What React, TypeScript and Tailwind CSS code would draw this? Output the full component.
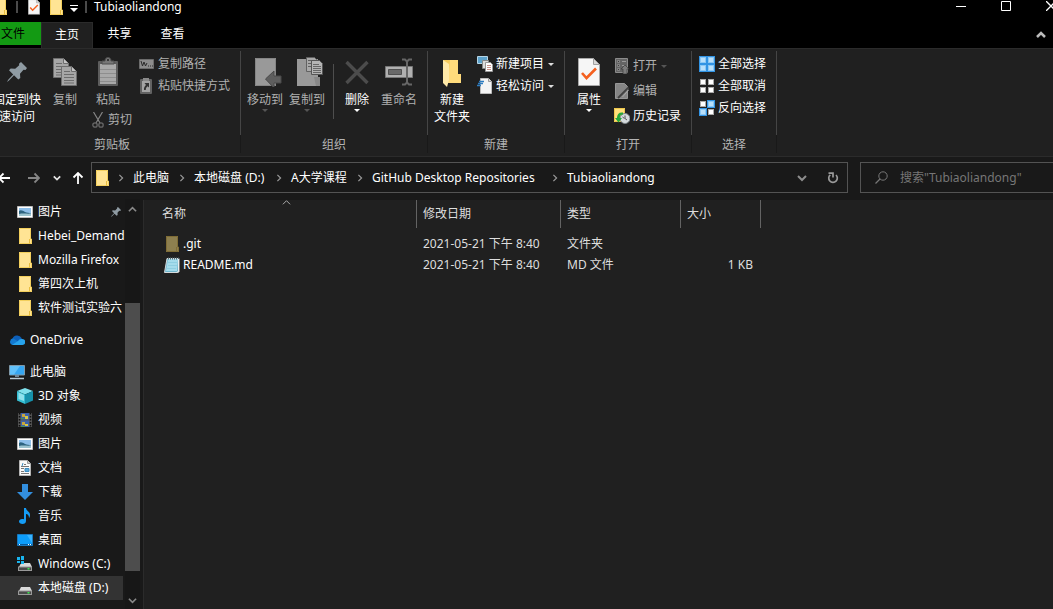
import React from "react";

type Kids = { children: React.ReactNode };

/* ---------- icons ---------- */

const Folder = ({ dim = false }: { dim?: boolean }) => (
  <svg width="16" height="16" viewBox="0 0 16 16" className="shrink-0" aria-hidden="true">
    <path d="M2 0h12v11h1v5H2z" fill={dim ? "#8d7f4f" : "#ffe494"} />
    <path d="M2.500 .5h11v10.500h1v4.500h-12z" fill="none" stroke={dim ? "#7f6c35" : "#f3cf5c"} />
    <path d="M12.500 11v4.500" stroke={dim ? "#7f6c35" : "#e8bd3f"} />
  </svg>
);

const Check = ({ w, h }: { w: number; h: number }) => (
  <svg width={w} height={h} viewBox="0 0 22 28" aria-hidden="true">
    <path d="M.5 .5h15l6 6v21H.5z" fill="#f6f6f6" stroke="#a9a9a9" />
    <path d="M15.500 .5v6h6z" fill="#d8d8d8" stroke="#a0a0a0" />
    <path d="M4 15l4.500 5L18 10.500" fill="none" stroke="#f4601f" strokeWidth="2.600" />
  </svg>
);

const Pin = ({ size, color }: { size: number; color: string }) => (
  <svg width={size} height={size} viewBox="0 0 20 20" aria-hidden="true">
    <path
      d="M14 0l6 6-1.500 2-2-.3-3.500 4 .3 4.300-2 1.500-4.300-4.200L2 18.600 0 20l1.200-2.300 5-5.200L2 8.200l1.700-1.700 4.500.3 4-3.600L12 1.700z"
      fill={color}
    />
  </svg>
);

const Page = ({ x, y }: { x: number; y: number }) => (
  <g transform={`translate(${x} ${y})`}>
    <path d="M.5 .5h10l5 5v14H.5z" fill="#a6a6a6" stroke="#6e6e6e" />
    <path d="M10.500 .5v5h5" fill="#c4c4c4" stroke="#6e6e6e" />
    <path d="M3 5.500h6M3 8.500h10M3 11.500h10M3 14.500h10M3 17h10" stroke="#6c6c6c" />
  </g>
);

const Copy = () => (
  <svg width="24" height="28" viewBox="0 0 24 28" aria-hidden="true">
    <Page x={0} y={0} />
    <Page x={8} y={8} />
  </svg>
);

const Paste = () => (
  <svg width="22" height="30" viewBox="0 0 22 30" aria-hidden="true">
    <rect x="1" y="4" width="20" height="25" rx="1" fill="#5d5d5d" />
    <path d="M3 7h16v20H3z" fill="#a9a9a9" />
    <path d="M3 12.500h16M3 16.500h16M3 20.500h16M3 24.500h16" stroke="#8e8e8e" />
    <path d="M5 7V4h3c0-2 1-3.500 3-3.500S14 2 14 4h3v3z" fill="#777" stroke="#4e4e4e" />
    <circle cx="11" cy="3" r="1" fill="#222" />
  </svg>
);

const Scissors = () => (
  <svg width="12" height="16" viewBox="0 0 12 16" fill="none" aria-hidden="true">
    <path d="M1.500 0L8 11M10.500 0L4 11" stroke="#858585" strokeWidth="1.200" />
    <circle cx="3" cy="13" r="2.200" stroke="#666" strokeWidth="1.300" />
    <circle cx="9" cy="13" r="2.200" stroke="#666" strokeWidth="1.300" />
  </svg>
);

const CopyPath = () => (
  <svg width="16" height="16" viewBox="0 0 16 16" aria-hidden="true">
    <path d="M.5 3.500h14v9H.5z" fill="#8d8d8d" stroke="#6c6c6c" />
    <path d="M2 5l1.500 5L5 6l1.500 4L8 7M9 10h1M11 10h1M13 10h1" fill="none" stroke="#2a2a2a" />
  </svg>
);

const PasteLink = () => (
  <svg width="16" height="16" viewBox="0 0 16 16" aria-hidden="true">
    <rect x="1" y="1" width="12" height="15" rx="1" fill="#626262" />
    <path d="M3 3h8v11H3z" fill="#a4a4a4" />
    <path d="M4 0h6v3H4z" fill="#8a8a8a" />
    <path d="M5.500 5H10v4.500L8.600 8.200C7 9.500 6.800 10.500 6.800 12H5c-.2-2.300.5-3.600 2-5z" fill="#333" />
  </svg>
);

const MoveTo = () => (
  <svg width="36" height="30" viewBox="-8 0 36 30" aria-hidden="true">
    <path d="M0 1h21v28H0z" fill="#999" />
    <path d="M.5 1.500h20v27H.5z" fill="none" stroke="#858585" />
    <path d="M10.500 22l8.500-8v5h7v7h-7v5z" fill="#5e5e5e" stroke="#494949" />
  </svg>
);

const CopyTo = () => (
  <svg width="36" height="30" viewBox="-8 0 36 30" aria-hidden="true">
    <path d="M0 2h21v27H0z" fill="#999" />
    <path d="M17 20h6v9h-4z" fill="#888" />
    <path d="M9.500 .5h8l2 2v12h-10z" fill="#a9a9a9" stroke="#626262" />
    <path d="M11 3.500h6M11 6.500h4M11 9.500h4" stroke="#606060" />
    <path d="M14.500 3.500h8l3 3v11h-11z" fill="#b4b4b4" stroke="#555" />
    <path d="M16 7.500h6M16 9.500h8M16 11.500h8M16 13.500h8M16 15.500h8" stroke="#666" />
  </svg>
);

const Delete = () => (
  <svg width="26" height="30" viewBox="0 0 26 30" className="shrink-0" aria-hidden="true">
    <path d="M2.500 5l21 21M23.500 5l-21 21" stroke="#4c4c4c" strokeWidth="3.400" />
  </svg>
);

const Rename = () => (
  <svg width="28" height="30" viewBox="0 0 28 30" aria-hidden="true">
    <path d="M.5 9.500h27v11H.5z" fill="#b0b0b0" stroke="#777" />
    <path d="M3.500 12.500h13v5h-13z" fill="#696969" stroke="#505050" />
    <path d="M17 2.500h3l2 2 2-2h3M22 4v22M17 27.500h3l2-2 2 2h3" fill="none" stroke="#666" strokeWidth="2" />
  </svg>
);

const BigFolder = () => (
  <svg width="20" height="30" viewBox="0 0 20 30" aria-hidden="true">
    <path d="M1 3h15v14h3v9H6z" fill="#f5cb5c" />
    <path d="M8 3h8v14h3v9H6z" fill="#ffdb7c" />
    <path d="M1 3l6 4v16l-2 7-4-4z" fill="#ffe9a8" />
  </svg>
);

const NewItem = () => (
  <svg width="16" height="16" viewBox="0 0 16 16" aria-hidden="true">
    <path d="M.5 .5h10v7H.5z" fill="#5da2cb" stroke="#b5d5e6" />
    <path d="M5.500 4.500h6v8h-6z" fill="#ddd" stroke="#888" />
    <path d="M8.500 6.500h5l2 2v7h-7z" fill="#fff" stroke="#999" />
    <path d="M10 9.500h4M10 11.500h4M10 13.500h4" stroke="#c9938c" />
  </svg>
);

const EasyAccess = () => (
  <svg width="16" height="16" viewBox="0 0 16 16" aria-hidden="true">
    <path d="M3.500 .5h8l3 3v12h-11z" fill="#f4f4f4" stroke="#bbb" />
    <path d="M11.500 .5v3h3" fill="#ddd" stroke="#999" />
    <path d="M2 3.500h5M1 5.500h5M0 7.500h4" stroke="#2e7cc0" strokeWidth="1.300" />
  </svg>
);

const OpenIcon = () => (
  <svg width="14" height="16" viewBox="0 0 14 16" aria-hidden="true">
    <path d="M.5 .5h12v14H.5z" fill="#646464" stroke="#8b8b8b" />
    <path d="M2.500 2.500h2v2h-2zM2.500 6.500h2v2h-2zM2.500 10.500h2v2h-2z" fill="#3a3a3a" stroke="#999" strokeWidth=".7" />
    <path d="M7 3.500h4M7 7.500h3" stroke="#999" />
    <path d="M10 7l4 4h-2v5H8v-5H6z" fill="#7c7c7c" stroke="#333" strokeWidth=".6" />
  </svg>
);

const EditIcon = () => (
  <svg width="14" height="16" viewBox="0 0 14 16" aria-hidden="true">
    <path d="M.5 .5h9l3 3v12H.5z" fill="#858585" stroke="#969696" />
    <path d="M13.500 4.500L5 13l-2 2" stroke="#404040" strokeWidth="1.800" />
    <path d="M14 6.500L7.500 14" stroke="#a8a8a8" />
  </svg>
);

const History = () => (
  <svg width="16" height="16" viewBox="0 0 16 16" aria-hidden="true">
    <path d="M0 0h11v14H0z" fill="#ffe07b" />
    <path d="M.5 .5h10v13H.5z" fill="none" stroke="#edc64b" />
    <circle cx="11" cy="10.500" r="5" fill="#d5dadd" stroke="#7d8588" />
    <path d="M11 7.500v3l2 1.500M8.500 9l2 1.500" fill="none" stroke="#555" />
    <path d="M9 4.500C5 4 3 6 3 10H1l3.500 4.500L8 10H5.800C5.800 7.500 7 6.500 9 6.500z" fill="#24a83b" />
  </svg>
);

const Grid = ({ on }: { on: boolean[] }) => (
  <svg width="16" height="16" viewBox="0 0 16 16" aria-hidden="true">
    {on.map((v, i) => {
      const x = (i % 2) * 8;
      const y = i > 1 ? 8 : 0;
      return v ? (
        <g key={i}>
          <rect x={x} y={y} width="8" height="8" fill="#3294e4" />
          <rect x={x + 1.5} y={y + 1.5} width="5" height="5" fill="#b9e0fb" stroke="#8cc8f5" />
        </g>
      ) : (
        <rect key={i} x={x + 1.5} y={y + 1.5} width="5" height="5" fill="#fff" stroke="#aaa" />
      );
    })}
  </svg>
);

const Picture = () => (
  <svg width="16" height="16" viewBox="0 0 16 16" aria-hidden="true">
    <path d="M.5 2.500h15v11H.5z" fill="#fff" stroke="#bcbcbc" />
    <path d="M2 4h12v8H2z" fill="#8fc0ea" />
    <path d="M2 7c2-1.500 4 0 6 1s4 .500 6 1.500v1H2z" fill="#2d6480" />
    <path d="M2 10c4-1 8 0 12-.5V12H2z" fill="#9cc4cf" />
  </svg>
);

const OneDrive = () => (
  <svg width="16" height="16" viewBox="0 0 16 16" aria-hidden="true">
    <path d="M3.500 7a4.800 4.500 0 0 1 9-1l1 3-8 2z" fill="#0d5fb8" />
    <path d="M3.500 13A3.500 3.500 0 0 1 4 6.200l8 5L8 13z" fill="#1379d0" />
    <path d="M9 9a4 4 0 0 1 4-2 3 3 0 0 1 .500 6H3z" fill="#27a3ec" />
  </svg>
);

const Computer = () => (
  <svg width="16" height="16" viewBox="0 0 16 16" aria-hidden="true">
    <path d="M.5 1.500h15v9.500H.5z" fill="#35a6f2" stroke="#7f98a8" />
    <path d="M1 2h10L5 10.500H1z" fill="#62c1fa" />
    <path d="M6 11h4v2H6z" fill="#6f8798" />
    <path d="M1 14.500h14" stroke="#b8cad4" strokeWidth="1.500" />
  </svg>
);

const Cube = () => (
  <svg width="16" height="16" viewBox="0 0 16 16" aria-hidden="true">
    <path d="M8 0l8 3-8 3.500L0 3z" fill="#7fe0ec" />
    <path d="M0 3l8 3.500V16l-8-3.500z" fill="#37bfd3" />
    <path d="M16 3L8 6.500V16l8-3.500z" fill="#1691ab" />
    <path d="M1.500 4.500L7 7v6l-5.500-2z" fill="#b5f0f6" opacity=".7" />
  </svg>
);

const Film = () => (
  <svg width="16" height="16" viewBox="0 0 16 16" aria-hidden="true">
    <path d="M1 1h14v14H1z" fill="#555" />
    <path d="M2.500 1v14M13.500 1v14" stroke="#111" strokeDasharray="1.500 1.500" strokeWidth="1.500" />
    <path d="M4 1h8v6.500H4zM4 8.500h8V15H4z" fill="#3e62a8" />
    <path d="M5 2h3v3H5zM5 10h3v3H5z" fill="#c9a63a" />
    <path d="M8 4h3v3H8zM8 12h3v2H8z" fill="#d6c847" />
    <path d="M4 6h3v1H4zM4 14h4v1H4z" fill="#46905a" />
  </svg>
);

const Doc = () => (
  <svg width="16" height="16" viewBox="0 0 16 16" aria-hidden="true">
    <path d="M2.500 .5h8l3 3v12h-11z" fill="#fafafa" stroke="#b5b5b5" />
    <path d="M10.500 .5v3h3" fill="#ccc" stroke="#999" />
    <path d="M7 4.500h2M4 6.500h8M4 8.500h3M4 11.500h3M4 13.500h8" stroke="#777" />
    <path d="M6 3l-1 3M8 8.500h4v3H8z" fill="#5ba7d6" stroke="#3c8dc2" />
  </svg>
);

const Download = () => (
  <svg width="16" height="16" viewBox="0 0 16 16" aria-hidden="true">
    <path d="M5 0h6v8h5l-8 8-8-8h5z" fill="#328fe0" />
  </svg>
);

const Music = () => (
  <svg width="16" height="16" viewBox="0 0 16 16" aria-hidden="true">
    <path d="M7 0h2c0 3 4 3.500 4 7 0 1.500-.5 2.500-1 3 0-3-1.200-3.600-3-4v7c0 2-1.500 3-3.500 3S2 15 2 13.500 3.500 11 5 11c1 0 1.500.1 2 .3z" fill="#159cf5" />
  </svg>
);

const Desktop = () => (
  <svg width="16" height="16" viewBox="0 0 16 16" aria-hidden="true">
    <path d="M.5 2.500h15v11H.5z" fill="#0d9dfa" stroke="#1b79bd" />
    <path d="M10 3h5v8z" fill="#38b4ff" />
    <path d="M1 12.500h14" stroke="#075b9d" />
    <path d="M2 12.500h1M11 12.500h1M13 12.500h1" stroke="#fff" />
  </svg>
);

const Disk = ({ win = false }: { win?: boolean }) => (
  <svg width="16" height="16" viewBox="0 0 16 16" aria-hidden="true">
    <path d="M4 7h9l2 4H2z" fill="#d9d9d9" />
    <path d="M1 10.500h14V15H1z" fill="#999" />
    <path d="M2 11.500h12V14H2z" fill="#4a4a4a" />
    <path d="M10.500 12h2v1.500h-2z" fill="#39e84f" />
    {win && (
      <>
        <path d="M0 0h7v8H0z" fill="#191919" />
        <path d="M0 1h3v3H0zM4 0h3v4H4zM0 5h3v2H0zM4 5h3v3H4z" fill="#19b4ee" />
      </>
    )}
  </svg>
);

const Notepad = () => (
  <svg width="16" height="16" viewBox="0 0 16 16" aria-hidden="true">
    <path d="M3 1.500h12V15l-3 .5H.5z" fill="#6fb6cd" stroke="#d5dadc" />
    <path d="M4 2h10l-1 12H2z" fill="#a5dcec" />
    <path d="M4 5.500h9M4 8.500h9M3 11.500h9" stroke="#8fcfe2" />
    <path d="M4 1.500h11" stroke="#4f6972" strokeWidth="2" strokeDasharray="1 1" />
    <path d="M14.500 2v12.500l-2 1" stroke="#eee" fill="none" />
  </svg>
);

const Chevron = ({ dir, color, size = 10, width = 1.5 }: { dir: "up" | "down" | "right"; color: string; size?: number; width?: number }) => (
  <svg width={size} height={size} viewBox="0 0 10 10" fill="none" aria-hidden="true">
    <path
      d={dir === "up" ? "M1 7l4-4 4 4" : dir === "down" ? "M1 3l4 4 4-4" : "M3 1l4 4-4 4"}
      stroke={color}
      strokeWidth={width}
    />
  </svg>
);

const Arrow = ({ dir, color }: { dir: "left" | "right" | "up"; color: string }) => (
  <svg width="12" height="12" viewBox="0 0 12 12" fill="none" aria-hidden="true">
    <path
      d={
        dir === "left"
          ? "M12 6H1M5.500 1.500L1 6l4.500 4.500"
          : dir === "right"
            ? "M0 6h11M6.500 1.500L11 6l-4.500 4.500"
            : "M6 12V1M1.500 5.500L6 1l4.500 4.500"
      }
      stroke={color}
      strokeWidth="1.800"
    />
  </svg>
);

const Caret = ({ color }: { color: string }) => (
  <svg width="6" height="3" viewBox="0 0 6 3" aria-hidden="true">
    <path d="M0 0h6L3 3z" fill={color} />
  </svg>
);

/* ---------- ribbon ---------- */

const Group = ({ label, className, children }: Kids & { label: string; className: string }) => (
  <section aria-label={label} className={`flex shrink-0 flex-col ${className}`}>
    <div className="flex h-[87px] items-start pt-2">{children}</div>
    <div className="text-center leading-[18px] text-[#b4b4b4]">{label}</div>
  </section>
);

const Separator = () => (
  <div className="mt-[2px] flex w-px shrink-0 flex-col">
    <div className="h-[84px] bg-[#454545]" />
    <div className="h-[18px] bg-[#191919]" />
  </div>
);

type BigProps = { icon: React.ReactNode; lines: string[]; caret?: string; dim?: boolean; className: string };
const Big = ({ icon, lines, caret, dim, className }: BigProps) => (
  <button type="button" className={`flex shrink-0 flex-col items-center leading-[17px] ${dim ? "text-[#b0b0b0]" : "text-white"} ${className}`}>
    <span className="mb-1 flex h-[30px] items-center">{icon}</span>
    {lines.map((l) => (
      <span key={l} className="block whitespace-nowrap">{l}</span>
    ))}
    {caret && <span className="mt-px"><Caret color={caret} /></span>}
  </button>
);

type SmallProps = { icon: React.ReactNode; text: string; caret?: string; dim?: boolean };
const Small = ({ icon, text, caret, dim }: SmallProps) => (
  <button type="button" className={`flex items-center whitespace-nowrap leading-4 ${dim ? "text-[#b0b0b0]" : "text-white"}`}>
    <span className="mr-[3px] flex w-4 justify-center">{icon}</span>
    {text}
    {caret && <span className="ml-1"><Caret color={caret} /></span>}
  </button>
);

/* ---------- navigation tree ---------- */

type Node = { icon: React.ReactNode; text: string; root?: boolean; pinned?: boolean; active?: boolean };
const tree: Node[] = [
  { icon: <Picture />, text: "图片", pinned: true },
  { icon: <Folder />, text: "Hebei_Demand" },
  { icon: <Folder />, text: "Mozilla Firefox" },
  { icon: <Folder />, text: "第四次上机" },
  { icon: <Folder />, text: "软件测试实验六" },
  { icon: <OneDrive />, text: "OneDrive", root: true },
  { icon: <Computer />, text: "此电脑", root: true },
  { icon: <Cube />, text: "3D 对象" },
  { icon: <Film />, text: "视频" },
  { icon: <Picture />, text: "图片" },
  { icon: <Doc />, text: "文档" },
  { icon: <Download />, text: "下载" },
  { icon: <Music />, text: "音乐" },
  { icon: <Desktop />, text: "桌面" },
  { icon: <Disk win />, text: "Windows (C:)" },
  { icon: <Disk />, text: "本地磁盘 (D:)", active: true },
];

const crumbs = [
  { text: "此电脑", width: "min-w-9" },
  { text: "本地磁盘 (D:)", width: "min-w-[72px]" },
  { text: "A大学课程", width: "min-w-14" },
  { text: "GitHub Desktop Repositories", width: "min-w-[170px]" },
  { text: "Tubiaoliandong", width: "min-w-[88px]" },
];

const files = [
  { icon: <Folder dim />, name: ".git", date: "2021-05-21 下午 8:40", type: "文件夹", size: "" },
  { icon: <Notepad />, name: "README.md", date: "2021-05-21 下午 8:40", type: "MD 文件", size: "1 KB" },
];

const columns = [
  { title: "名称", th: "w-[273px]", pad: "pl-[18px]" },
  { title: "修改日期", th: "w-36", pad: "pl-[6px]" },
  { title: "类型", th: "w-[120px]", pad: "pl-[6px]" },
  { title: "大小", th: "w-20", pad: "pl-[6px]" },
];

export default function App() {
  return (
    <div className="flex min-h-screen flex-col overflow-hidden bg-[#191919] font-['Noto_Sans','Noto_Sans_CJK_SC',sans-serif] text-xs text-white">
      <header className="bg-black">
        <div className="flex h-[22px] items-start overflow-hidden">
          <div className="-ml-2 flex h-[14px] flex-1 items-center">
            <Folder />
            <span className="ml-2 h-3 w-[2px] bg-[#4a4a4a]" />
            <button type="button" aria-label="属性" className="ml-[10px]"><Check w={12} h={16} /></button>
            <button type="button" aria-label="新建文件夹" className="ml-2"><Folder /></button>
            <button type="button" aria-label="自定义快速访问工具栏" className="ml-[6px]">
              <svg width="8" height="14" viewBox="0 0 8 14" aria-hidden="true">
                <path d="M0 5.500h8" stroke="#fff" />
                <path d="M0 8h8l-4 4z" fill="#fff" />
              </svg>
            </button>
            <span className="ml-[7px] h-3 w-[2px] bg-[#4a4a4a]" />
            <h1 className="ml-[7px] leading-[14px]">Tubiaoliandong</h1>
          </div>
          <div className="-mr-[3px] flex h-3 items-center gap-[35px]">
            <button type="button" aria-label="最小化">
              <svg width="10" height="10" viewBox="0 0 10 10"><path d="M0 5.500h10" stroke="#fff" /></svg>
            </button>
            <button type="button" aria-label="最大化">
              <svg width="10" height="10" viewBox="0 0 10 10"><path d="M.5 .5h9v9h-9z" fill="none" stroke="#fff" /></svg>
            </button>
            <button type="button" aria-label="关闭">
              <svg width="10" height="10" viewBox="0 0 10 10"><path d="M0 0l10 10M10 0L0 10" stroke="#fff" strokeWidth="1.300" /></svg>
            </button>
          </div>
        </div>
        <nav aria-label="功能区" className="flex h-[26px] items-start">
          <button type="button" className="h-[23px] w-[41px] bg-[#139a13] pr-4 text-right text-black">文件</button>
          <button type="button" className="h-[27px] w-[52px] border border-b-0 border-[#2b2b2b] bg-[#202020] pb-[3px]">主页</button>
          <button type="button" className="h-6 w-[53px]">共享</button>
          <button type="button" className="h-6 w-[53px]">查看</button>
          <button type="button" aria-label="折叠功能区" className="mt-2 mr-[7px] ml-auto"><Chevron dir="up" color="#bbb" width={2.5} /></button>
        </nav>
      </header>

      <div className="flex h-[109px] overflow-hidden border-y border-[#2b2b2b] bg-[#202020]">
        <Group label="剪贴板" className="-ml-4 w-64">
          <Big className="ml-[9px] w-12" icon={<Pin size={20} color="#8f9ba3" />} lines={["固定到快", "速访问"]} />
          <Big className="ml-3 w-6" dim icon={<Copy />} lines={["复制"]} />
          <div className="ml-[15px] flex w-[42px] flex-col">
            <Big className="ml-1 w-6 self-start" dim icon={<Paste />} lines={["粘贴"]} />
            <button type="button" className="mt-1 flex items-center gap-1 leading-4 whitespace-nowrap text-[#b0b0b0]">
              <Scissors />剪切
            </button>
          </div>
          <div className="-mt-px ml-[5px] flex flex-col gap-[6px]">
            <Small dim icon={<CopyPath />} text="复制路径" />
            <Small dim icon={<PasteLink />} text="粘贴快捷方式" />
          </div>
        </Group>
        <Separator />
        <Group label="组织" className="w-[186px]">
          <Big className="ml-[6px] w-9" dim icon={<MoveTo />} lines={["移动到"]} caret="#555" />
          <Big className="ml-[6px] w-9" dim icon={<CopyTo />} lines={["复制到"]} caret="#555" />
          <div className="mt-[7px] ml-2 h-[55px] w-px bg-[#4e4e4e]" />
          <Big className="ml-[10px] w-[26px]" icon={<Delete />} lines={["删除"]} caret="#fff" />
          <Big className="ml-[11px] w-9" dim icon={<Rename />} lines={["重命名"]} />
        </Group>
        <Separator />
        <Group label="新建" className="w-[136px]">
          <Big className="ml-[6px] w-9" icon={<BigFolder />} lines={["新建", "文件夹"]} />
          <div className="-mt-px ml-[7px] flex flex-col gap-[6px]">
            <Small icon={<NewItem />} text="新建项目" caret="#ddd" />
            <Small icon={<EasyAccess />} text="轻松访问" caret="#ddd" />
          </div>
        </Group>
        <Separator />
        <Group label="打开" className="w-[126px]">
          <Big className="ml-3 w-6" icon={<Check w={22} h={28} />} lines={["属性"]} caret="#fff" />
          <div className="mt-px ml-[13px] flex flex-col gap-[9px]">
            <Small dim icon={<OpenIcon />} text="打开" caret="#555" />
            <Small dim icon={<EditIcon />} text="编辑" />
            <Small icon={<History />} text="历史记录" />
          </div>
        </Group>
        <Separator />
        <Group label="选择" className="w-[84px]">
          <div className="-mt-px ml-[7px] flex flex-col gap-[6px]">
            <Small icon={<Grid on={[true, true, true, true]} />} text="全部选择" />
            <Small icon={<Grid on={[false, false, false, false]} />} text="全部取消" />
            <Small icon={<Grid on={[false, true, true, false]} />} text="反向选择" />
          </div>
        </Group>
        <Separator />
      </div>

      <div className="flex h-[42px] items-start overflow-hidden pt-[5px]">
        <div className="flex h-[31px] w-[91px] shrink-0 items-center">
          <button type="button" aria-label="后退" className="-ml-[2px]"><Arrow dir="left" color="#fff" /></button>
          <button type="button" aria-label="前进" className="ml-[18px]"><Arrow dir="right" color="#858585" /></button>
          <button type="button" aria-label="最近位置" className="ml-[13px]"><Chevron dir="down" color="#e5e5e5" size={8} width={2.2} /></button>
          <button type="button" aria-label="上移" className="ml-[11px]"><Arrow dir="up" color="#fff" /></button>
        </div>
        <div className="flex h-[31px] min-w-0 flex-1 items-center border border-[#535353] pl-[2px]">
          <Folder />
          <nav aria-label="路径" className="-ml-[2px] flex items-center">
            {crumbs.map((c) => (
              <React.Fragment key={c.text}>
                <span className="flex w-[25px] justify-center"><Chevron dir="right" color="#999" size={8} /></span>
                <a href="#" className={`whitespace-nowrap ${c.width}`}>{c.text}</a>
              </React.Fragment>
            ))}
          </nav>
          <button type="button" aria-label="以前的位置" className="ml-auto"><Chevron dir="down" color="#8d8d8d" width={2} /></button>
          <button type="button" aria-label="刷新" className="mr-2 ml-5">
            <svg width="12" height="12" viewBox="0 0 12 12" fill="none" aria-hidden="true">
              <path d="M9 3A4.300 4.300 0 1 1 3.300 2.800" stroke="#9a9a9a" strokeWidth="1.700" />
              <path d="M1.500 1.200H6v4.300" stroke="#9a9a9a" strokeWidth="1.700" />
            </svg>
          </button>
        </div>
        <label className="ml-3 flex h-[31px] w-[193px] shrink-0 items-center border border-r-0 border-[#535353] pl-[14px]">
          <svg width="13" height="13" viewBox="0 0 13 13" fill="none" aria-hidden="true">
            <circle cx="8" cy="5" r="4.200" stroke="#777" />
            <path d="M5 8L.5 12.500" stroke="#777" strokeWidth="1.300" />
          </svg>
          <input
            type="text"
            aria-label="搜索"
            placeholder={'搜索"Tubiaoliandong"'}
            className="ml-3 min-w-0 flex-1 bg-transparent outline-none placeholder:text-[#767676]"
          />
        </label>
      </div>

      <div className="flex flex-1">
        <nav aria-label="导航窗格" className="w-[125px] shrink-0 overflow-hidden pt-px">
          {tree.map((n, i) => (
            <a
              key={i}
              href="#"
              className={`flex h-6 items-center gap-[5px] overflow-hidden whitespace-nowrap ${n.root ? "mt-2 pl-[9px]" : "pl-[17px]"} ${
                n.active ? "mr-[2px] bg-[#333]" : ""
              }`}
            >
              <span className="w-4 shrink-0">{n.icon}</span>
              <span>{n.text}</span>
              {n.pinned && <span className="mr-1 ml-auto"><Pin size={10} color="#8f9ba3" /></span>}
            </a>
          ))}
        </nav>
        <div className="flex w-[15px] shrink-0 flex-col items-center bg-[#171717]">
          <button type="button" aria-label="向上滚动" className="flex h-5 items-center"><Chevron dir="up" color="#888" size={9} width={1.8} /></button>
          <div className="grow-[84] basis-0" />
          <div className="w-full grow-[268] basis-0 bg-[#4d4d4d]" />
          <div className="grow-[21] basis-0" />
          <button type="button" aria-label="向下滚动" className="flex h-[17px] items-center"><Chevron dir="down" color="#888" size={9} width={1.8} /></button>
        </div>
        <main className="mt-px ml-[3px] min-w-0 flex-1 border-l border-[#2b2b2b] bg-[#202020]">
          <table className="table-fixed border-collapse">
            <thead>
              <tr>
                {columns.map((c, i) => (
                  <th key={c.title} scope="col" className={`relative h-[33px] p-0 text-left align-top font-normal text-[#dedede] ${c.th}`}>
                    <div className={`flex h-7 items-center border-r border-[#636363] ${c.pad}`}>{c.title}</div>
                    {i === 0 && (
                      <span className="absolute -top-[2px] right-[126px]"><Chevron dir="up" color="#aaa" size={9} width={1.1} /></span>
                    )}
                  </th>
                ))}
              </tr>
            </thead>
            <tbody className="text-[#dedede]">
              {files.map((f) => (
                <tr key={f.name} className="h-[21px]">
                  <td className="py-0 pl-5">
                    <a href="#" className="flex items-center gap-[3px] text-white">{f.icon}{f.name}</a>
                  </td>
                  <td className="py-0 pl-[6px] whitespace-nowrap">{f.date}</td>
                  <td className="py-0 pl-[6px]">{f.type}</td>
                  <td className="py-0 pr-2 text-right">{f.size}</td>
                </tr>
              ))}
            </tbody>
          </table>
        </main>
      </div>
    </div>
  );
}
